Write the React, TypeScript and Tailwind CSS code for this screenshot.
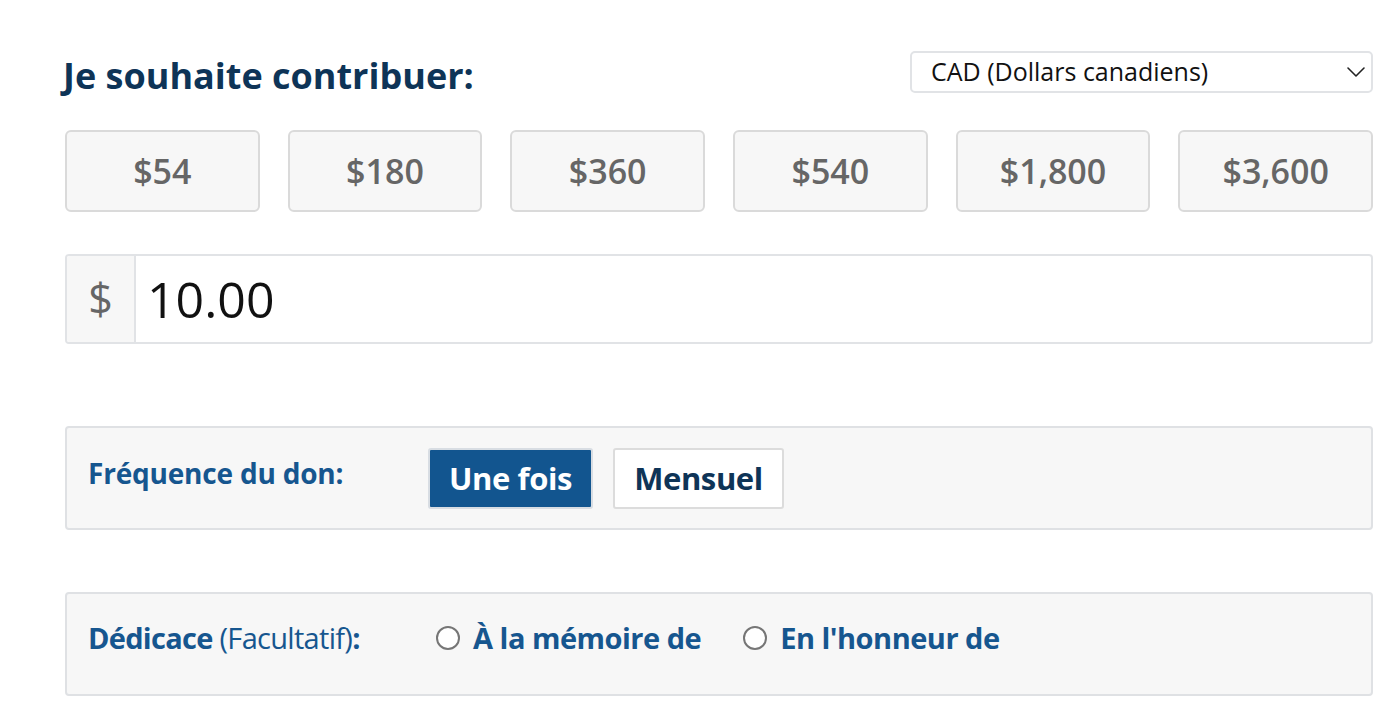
const amounts = ["$54", "$180", "$360", "$540", "$1,800", "$3,600"];

function Radio({ label }: { label: string }) {
  return (
    <label className="flex items-center gap-[13px] cursor-pointer">
      <span className="w-[24px] h-[24px] rounded-full border-2 border-[#767676] bg-white" />
      <span className="text-[29px] font-bold text-[#16568f] tracking-[-0.5px]">{label}</span>
    </label>
  );
}

export default function App() {
  return (
    <div className="min-h-screen bg-white pl-[65px] pr-[23px] pt-[51px] font-['Open_Sans',sans-serif]">
      {/* Header */}
      <div className="flex items-start justify-between">
        <h2 className="mt-[4px] -ml-[2px] text-[36px] leading-[42px] font-bold text-[#0e3457]">
          Je souhaite contribuer:
        </h2>
        <div className="w-[463px] h-[42px] flex items-center justify-between pl-[19px] pr-[5px] border-2 border-[#e1e3e6] rounded-[5px] bg-white">
          <span className="text-[25px] text-[#111]">CAD (Dollars canadiens)</span>
          <svg width="20" height="12" viewBox="0 0 20 12" fill="none" className="text-[#222]">
            <path d="M2 2 L10 10 L18 2" stroke="currentColor" strokeWidth="1.6" strokeLinecap="round" strokeLinejoin="round" />
          </svg>
        </div>
      </div>

      {/* Preset amounts */}
      <div className="mt-[33px] grid grid-cols-6 gap-[28px]">
        {amounts.map((a) => (
          <button
            key={a}
            className="h-[82px] rounded-[6px] border-2 border-[#dadada] bg-[#f7f7f7] text-[34px] font-semibold text-[#666]"
          >
            {a}
          </button>
        ))}
      </div>

      {/* Custom amount */}
      <div className="mt-[42px] h-[90px] flex border-2 border-[#e1e3e6] rounded-[4px] overflow-hidden">
        <div className="w-[69px] flex items-center justify-center bg-[#f7f7f7] border-r-2 border-[#e1e3e6] text-[43px] text-[#666]">
          $
        </div>
        <div className="flex items-center pl-[11px] text-[50px] text-[#111]">10.00</div>
      </div>

      {/* Frequency */}
      <div className="mt-[82px] h-[104px] flex items-start pt-[20px] pl-[21px] bg-[#f7f7f7] border-2 border-[#dfe1e4] rounded-[4px]">
        <div className="w-[340px] pt-[7px] text-[28px] leading-[36px] font-bold text-[#16568f] tracking-[-0.2px]">
          Fréquence du don:
        </div>
        <div className="flex gap-[20px]">
          <button className="w-[165px] h-[61px] rounded-[3px] border-2 border-[#d8dde3] bg-[#12558f] text-[31px] font-bold text-white tracking-[-0.4px]">
            Une fois
          </button>
          <button className="w-[171px] h-[61px] rounded-[3px] border-2 border-[#dcdcdc] bg-white text-[31px] font-bold text-[#0e3457] tracking-[-0.4px]">
            Mensuel
          </button>
        </div>
      </div>

      {/* Dedication */}
      <div className="mt-[62px] h-[104px] flex items-start pt-[25px] pl-[21px] bg-[#f7f7f7] border-2 border-[#dfe1e4] rounded-[4px]">
        <div className="w-[348px] text-[29px] leading-[38px] text-[#16568f] tracking-[-0.7px]">
          <span className="font-bold">Dédicace</span> (Facultatif)<span className="font-bold">:</span>
        </div>
        <div className="flex items-center gap-[42px] h-[38px]">
          <Radio label="À la mémoire de" />
          <Radio label="En l'honneur de" />
        </div>
      </div>
    </div>
  );
}
